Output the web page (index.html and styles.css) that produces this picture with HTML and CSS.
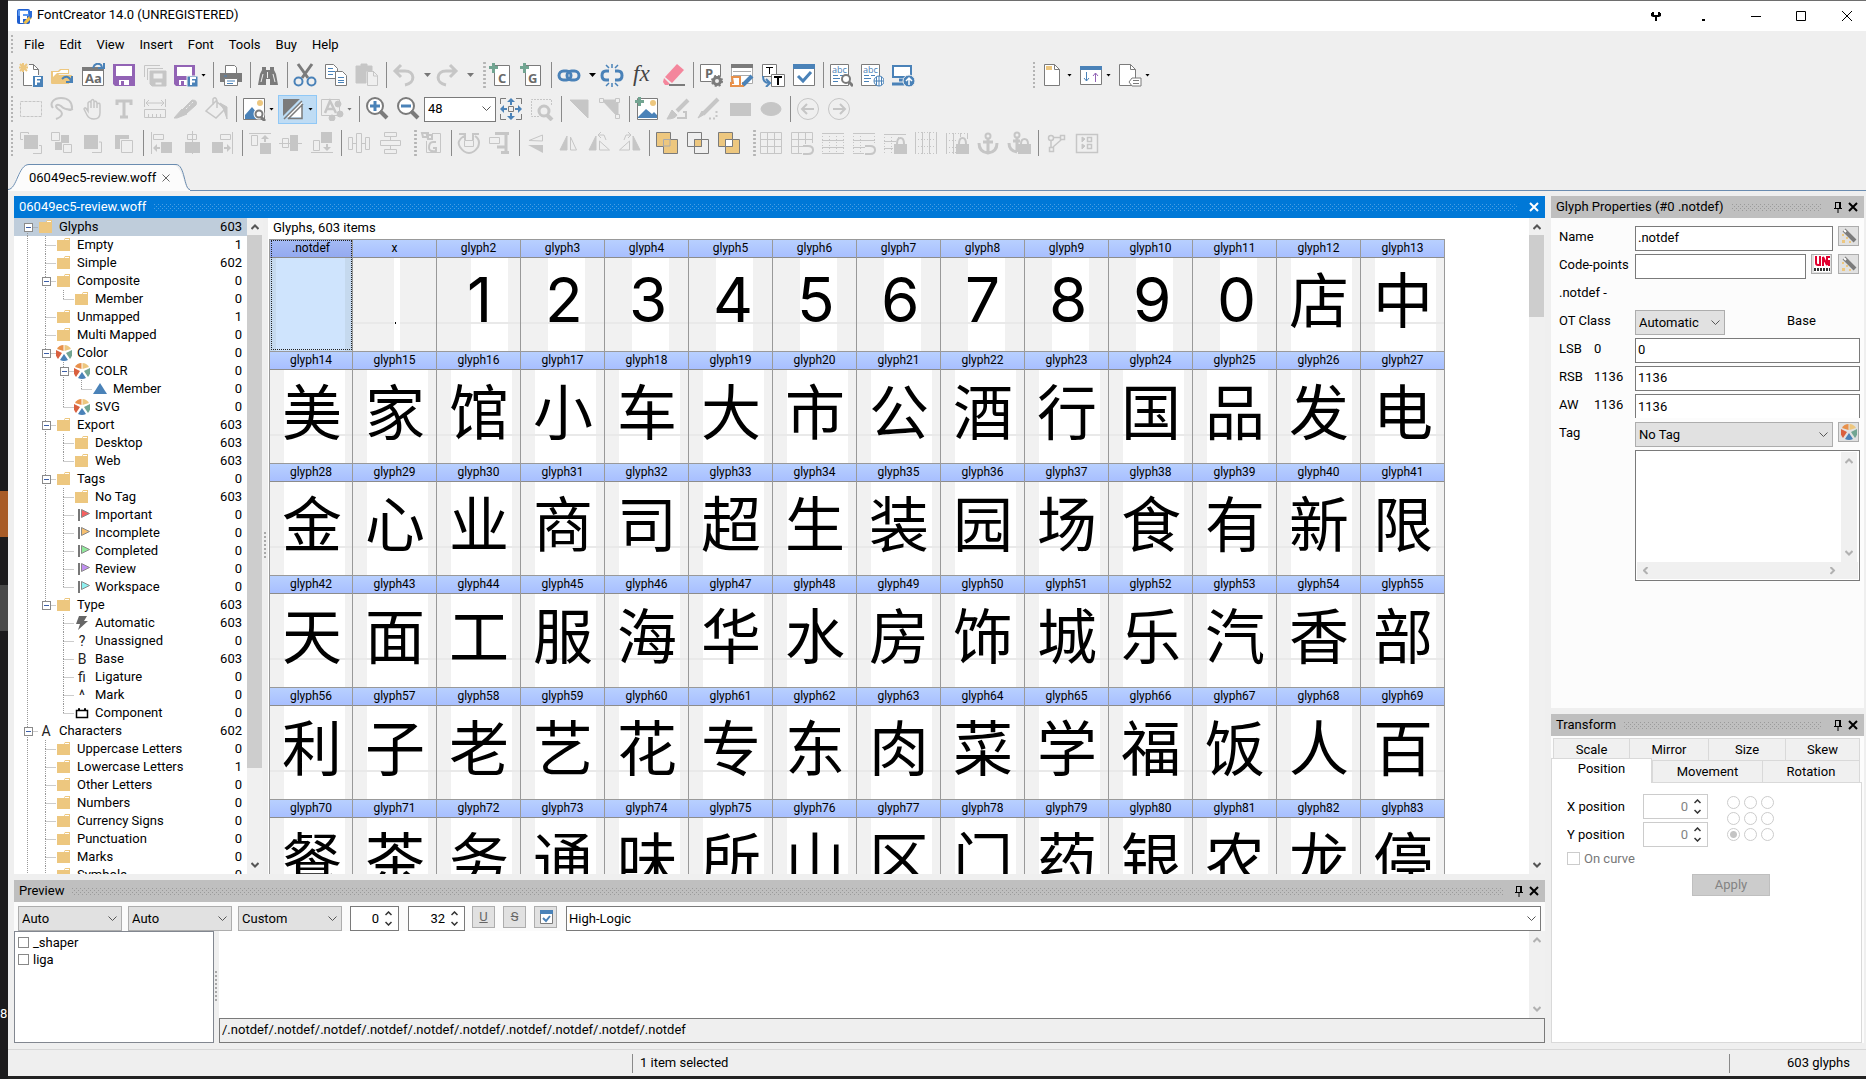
FILE: index.html
```html
<!DOCTYPE html>
<html lang="en">
<head>
<meta charset="utf-8">
<title>FontCreator 14.0 (UNREGISTERED)</title>
<link rel="stylesheet" href="styles.css">
<script src="app.js" defer></script>
</head>
<body>
<aside class="desktop"><i class="patch orange"></i><i class="patch grey"></i><span>8</span></aside>
<div class="window">
<header class="titlebar">
  <svg class="logo" viewBox="0 0 17 17"><rect x="1" y="1" width="13" height="15" rx="2" fill="#1f5fd0"/><rect x="2" y="2" width="11" height="6" rx="1" fill="#5a97f0"/><path d="M4 3h8v3H7v2h4v3H7v4H4z" fill="#fff"/><path d="M7 15l7-8 2 3-6 6z" fill="#f0c04a"/><path d="M12 3h4v6l-2 2-1-4z" fill="#2a6cd8"/></svg>
  <h1>FontCreator 14.0 (UNREGISTERED)</h1>
  <div class="winbtns">
    <button aria-label="Support"><svg viewBox="0 0 10 10"><path d="M1 1h2v3h4V1h2v1h1v3L8 6H6v4H4V6H2L0 5V2h1z" fill="#000"/></svg></button>
    <button aria-label="More"><svg viewBox="0 0 10 10"><path d="M4 8h3v2H4z" fill="#000"/></svg></button>
    <button aria-label="Minimize"><svg viewBox="0 0 10 10"><path d="M0 5h10v1H0z" fill="#000"/></svg></button>
    <button aria-label="Maximize"><svg viewBox="0 0 10 10"><path d="M.5.5h9v9h-9z" stroke="#000"/></svg></button>
    <button aria-label="Close"><svg viewBox="0 0 10 10"><path d="M0 0l10 10M10 0L0 10" stroke="#000"/></svg></button>
  </div>
</header>
<nav class="menu"><i class="grip"></i><button>File</button><button>Edit</button><button>View</button><button>Insert</button><button>Font</button><button>Tools</button><button>Buy</button><button>Help</button></nav>

<div class="bar" role="toolbar" aria-label="Standard">
  <i class="grip"></i>
  <button aria-label="New"><svg viewBox="0 0 24 24"><path d="M10 2h4l6 5v15H4V10" fill="#fff" stroke="none"/><path d="M10 1.500h4.500l5 5V12M14.500 1.500v5h5M4.500 9v13.500H13" stroke="#7b7b7b"/><path d="M4 0v9M0 4.500h9M1 1l7 7M8 1L1 8" stroke="#edc77f" stroke-width="2"/><path d="M14 13h10v11H14z" fill="#4a82b8"/><path d="M17 22v-7h5M17 18.500h4" stroke="#fff" stroke-width="2"/></svg></button>
  <button aria-label="Open"><svg viewBox="0 0 24 24"><path d="M1 20V8h7l2-2h9v5H9L5 20z" fill="#edc77f"/><path d="M3 14V9h6l2-2h7v3H7z" fill="#fff"/><path d="M6 12h16l-3 9H1z" fill="#edc77f"/><path d="M12 16c4-4 8-2 9 2M22 13v6h-6" stroke="#4a82b8" stroke-width="2"/></svg></button>
  <button aria-label="Font overview"><svg viewBox="0 0 24 24"><path d="M1.500 4.500h21v18h-21z" fill="#fff" stroke="#7b7b7b"/><path d="M1 4h22v4H1z" fill="#7b7b7b"/><path d="M12 5c2-6 8-5 9-1M23 0v5h-6" stroke="#4a82b8" stroke-width="2"/><text x="4" y="20" class="it">Aa</text></svg></button>
  <button aria-label="Save"><svg viewBox="0 0 24 24"><path d="M1 1h22v22H3l-2-2z" fill="#9263b5"/><path d="M4 3h16v10H4zM7 17h10v5H7z" fill="#fff"/><path d="M9 18h3v4H9z" fill="#9263b5"/></svg></button>
  <button disabled aria-label="Save all"><svg viewBox="0 0 24 24"><path d="M1.500 14V2.500H17M4.500 17V5.500H20"/><path d="M7 8h16v15H9l-2-2z" fill="currentColor"/><path d="M10 10h10v6H10zM12 19h7v3h-7z" fill="#efefef"/></svg></button>
  <button class="dd" aria-label="Save as"><svg viewBox="0 0 24 24"><path d="M0 2h21v21H2l-2-2z" fill="#9263b5"/><path d="M3 4h15v9H3zM5 17h9v5H5z" fill="#fff"/><path d="M7 18h3v4H7z" fill="#9263b5"/><path d="M13 13h11v11H13z" fill="#4a82b8" stroke="#efefef"/><path d="M17 22v-7h5M17 18.500h4" stroke="#fff" stroke-width="2"/></svg><i class="arr"></i></button>
  <i class="sep"></i>
  <button aria-label="Print"><svg viewBox="0 0 24 24"><path d="M6.500 10V2.500h9l2 2V10" fill="#fff" stroke="#7b7b7b"/><path d="M1 10h22v9H1z" fill="#7b7b7b"/><path d="M5.500 15.500h13v7h-13z" fill="#fff" stroke="#7b7b7b"/><path d="M8 18h8M8 20.500h6M5 13h3" stroke="#4a82b8"/></svg></button>
  <i class="sep"></i>
  <button aria-label="Find"><svg viewBox="0 0 24 24"><path d="M6 4h4v3h4V4h4v3l2 4 2 11h-8v-6h-4v6H2l2-11 2-4z" fill="#7b7b7b"/><path d="M11.500 9v6M7 11l-2 8M17 11l2 8" stroke="#efefef"/></svg></button>
  <i class="sep"></i>
  <button aria-label="Cut"><svg viewBox="0 0 24 24"><path d="M5 1l10 14M19 1L9 15" stroke="#7b7b7b" stroke-width="3"/><circle cx="5.500" cy="18.500" r="4" stroke="#4a82b8" stroke-width="2"/><circle cx="18.500" cy="18.500" r="4" stroke="#4a82b8" stroke-width="2"/></svg></button>
  <button aria-label="Copy"><svg viewBox="0 0 24 24"><path d="M1.500 1.500h8l4 4v10h-12z" fill="#fff" stroke="#7b7b7b"/><path d="M4 5.500h5M4 8.500h7M4 11.500h5" stroke="#4a82b8"/><path d="M11.500 8.500h7l4 4v10h-11z" fill="#fff" stroke="#7b7b7b"/><path d="M14 14.500h6M14 17.500h6M14 19.500h6" stroke="#4a82b8"/></svg></button>
  <button disabled aria-label="Paste"><svg viewBox="0 0 24 24"><path d="M1 3h5V1h6v2h5v5h-6v12H1z" fill="currentColor"/><path d="M12.500 8.500h6l4 4v10h-10z" fill="#efefef"/><path d="M18.500 8v5h4M5 5.500h8" /></svg></button>
  <i class="sep"></i>
  <button class="dw" disabled aria-label="Undo"><svg viewBox="0 0 24 24"><path d="M3 8h10c10 0 11 12 0 14M9 2L3 8l6 6" stroke-width="3"/></svg><i class="arr"></i></button>
  <button class="dw" disabled aria-label="Redo"><svg viewBox="0 0 24 24"><path d="M21 8H11C1 8 0 20 11 22M15 2l6 6-6 6" stroke-width="3"/></svg><i class="arr"></i></button>
  <i class="grip mid"></i>
  <button aria-label="Add characters"><svg viewBox="0 0 24 24"><path d="M5.500 2.500h15v20h-15z" fill="#fff" stroke="#7b7b7b"/><path d="M4.500 0v10M0 4.500h9" stroke="#72a592" stroke-width="3"/><text x="9" y="20" class="it">C</text></svg></button>
  <button aria-label="Add glyphs"><svg viewBox="0 0 24 24"><path d="M5.500 2.500h15v20h-15z" fill="#fff" stroke="#7b7b7b"/><path d="M4.500 0v10M0 4.500h9" stroke="#72a592" stroke-width="3"/><text x="8" y="20" class="it">G</text></svg></button>
  <i class="sep"></i>
  <button class="dw" aria-label="Link"><svg viewBox="0 0 24 24" stroke="#4a82b8" stroke-width="3"><rect x="2" y="8" width="12" height="9" rx="4.500"/><rect x="10" y="8" width="12" height="9" rx="4.500"/></svg><i class="arr"></i></button>
  <button aria-label="Unlink"><svg viewBox="0 0 24 24" stroke="#4a82b8"><path d="M9 8H6q-4 0-4 4.500t4 4.500h3M15 8h3q4 0 4 4.500T18 17h-3" stroke-width="3"/><path d="M12 1v4M12 20v4M6 2l3 3M18 2l-3 3M6 23l3-3M18 23l-3-3" stroke-width="1.500"/></svg></button>
  <button aria-label="Function"><svg viewBox="0 0 24 24"><text x="2" y="18" class="fx">fx</text></svg></button>
  <button aria-label="Erase"><svg viewBox="0 0 24 24"><path d="M15 1l7 6L10 20l-7-6z" fill="#f4869c"/><path d="M2 15l6 6-2 1H3l-2-3z" fill="#f4869c"/><path d="M7 22h16" stroke="#7b7b7b" stroke-width="2"/></svg></button>
  <i class="sep"></i>
  <button aria-label="Properties"><svg viewBox="0 0 24 24"><path d="M1.500 1.500h20v17h-20z" fill="#fff" stroke="#7b7b7b"/><text x="6" y="15" class="it">P</text><circle cx="18" cy="18" r="5.500" fill="#efefef"/><circle cx="18" cy="18" r="3.500" stroke="#7b7b7b" stroke-width="3"/><circle cx="18" cy="18" r="5" stroke="#7b7b7b" stroke-width="2" stroke-dasharray="2 2"/></svg></button>
  <button aria-label="Metrics"><svg viewBox="0 0 24 24"><path d="M1.500 3.500h21v17h-21z" fill="#fff" stroke="#aaa"/><path d="M1 1h22v4H1z" fill="#7b7b7b"/><path d="M3 8.500h18M3 12.500h18" stroke="#aaa"/><path d="M2 14h8v9H1v-3h2zM10 18v5h3v-4" fill="#fff" stroke="#e8904a" stroke-width="2"/><path d="M13 22l9-9" stroke="#4a82b8" stroke-width="4"/></svg></button>
  <button aria-label="Convert"><svg viewBox="0 0 24 24"><path d="M1.500 1.500h14v12h-14z" fill="#fff" stroke="#7b7b7b"/><path d="M5 4.500h7M8.500 5v6" stroke="#000"/><path d="M10.500 11.500h13v12h-13z" fill="#fff" stroke="#7b7b7b"/><path d="M13 14h8M17 14v8" stroke="#000" stroke-width="2"/><path d="M2 13c0 5 2 7 6 7M5 16l4 4-4 4" stroke="#4a82b8" stroke-width="2"/></svg></button>
  <button aria-label="Validate"><svg viewBox="0 0 24 24"><path d="M1.500 1.500h21v21h-21z" fill="#fff" stroke="#7b7b7b"/><path d="M1 1h22v5H1z" fill="#4a82b8"/><path d="M6 13l5 5 8-9" stroke="#4a82b8" stroke-width="3"/></svg></button>
  <i class="sep"></i>
  <button aria-label="Preview text"><svg viewBox="0 0 24 24"><path d="M1.500 1.500h18v21h-18z" fill="#fff" stroke="#7b7b7b"/><text x="3" y="10" class="abc">abc</text><path d="M4 12.500h5M11 12.500h4M4 15.500h7M4 18.500h5" stroke="#4a82b8"/><circle cx="17" cy="16" r="4" fill="#fff" stroke="#7b7b7b" stroke-width="2"/><path d="M20 19l4 4" stroke="#7b7b7b" stroke-width="3"/></svg></button>
  <button aria-label="Preview in browser"><svg viewBox="0 0 24 24"><path d="M1.500 1.500h18v21h-18z" fill="#fff" stroke="#7b7b7b"/><text x="3" y="10" class="abc">abc</text><path d="M4 12.500h5M11 12.500h4M4 15.500h7M4 18.500h5" stroke="#4a82b8"/><circle cx="19" cy="18" r="5" fill="#fff" stroke="#4a82b8"/><path d="M14 18h10M19 13v10M16.500 14v8M21.500 14v8" stroke="#4a82b8"/></svg></button>
  <button aria-label="Install"><svg viewBox="0 0 24 24"><path d="M2 3h18v11H2z" fill="#fff" stroke="#4a82b8" stroke-width="2"/><path d="M8 17h5M1 21h12" stroke="#4a82b8" stroke-width="3"/><circle cx="18" cy="18" r="6" fill="#4a82b8" stroke="#efefef"/><path d="M18 22v-7M15 18l3-3 3 3" stroke="#fff" stroke-width="1.500"/></svg></button>
  <i class="grip far"></i>
  <button class="dd" aria-label="Page"><svg viewBox="0 0 24 24"><path d="M4.500 1.500h10l5 5v16h-15z" fill="#fff" stroke="#7b7b7b"/><path d="M14.500 1.500v5h5" stroke="#7b7b7b"/><path d="M6 3h6v4H6z" fill="#edc77f"/></svg><i class="arr"></i></button>
  <button class="dd" aria-label="Sort"><svg viewBox="0 0 24 24"><path d="M1.500 4.500h21v17h-21z" fill="#fff" stroke="#7b7b7b"/><path d="M1 3h22v4H1z" fill="#4a82b8"/><path d="M7.500 9v9M5 15l2.500 3 2.500-3" stroke="#4a82b8"/><path d="M16.500 19v-9M14 13l2.500-3 2.500 3" stroke="#9263b5"/></svg><i class="arr"></i></button>
  <button class="dd" aria-label="Tags"><svg viewBox="0 0 24 24"><path d="M1.500 1.500h11l5 5v16h-16z" fill="#fff" stroke="#7b7b7b"/><path d="M12.500 1.500v5h5" stroke="#7b7b7b"/><path d="M11 19l3-4h9v8h-9z" fill="#fff" stroke="#7b7b7b"/><path d="M15 17.500h6M15 20.500h6" stroke="#7b7b7b"/></svg><i class="arr"></i></button>
</div>

<div class="bar" role="toolbar" aria-label="Drawing">
  <i class="grip"></i>
  <button disabled aria-label="Select"><svg viewBox="0 0 24 24"><path d="M1.500 4.500h21v15h-21z" stroke-dasharray="3 1"/></svg></button>
  <button disabled aria-label="Lasso"><svg viewBox="0 0 24 24"><path d="M3 11C-1 6 4 1 11 1c7 0 11 4 11 10 0 2-2 3-5 1M23 12c-4 1-9 0-12-3-4-3-7 0-3 3 5 3 6 7-2 10" stroke-width="2"/></svg></button>
  <button disabled aria-label="Pan"><svg viewBox="0 0 24 24"><path d="M7 14V6q2-3 3 0V4q2-3 3 0v1q2-2 3 1v1q3-2 3 1v8q0 6-6 6-5 0-7-4l-3-6q1-3 4 2zM10 5v6M13 5v6M16 6v5" stroke-width="1.500"/></svg></button>
  <button disabled aria-label="Text"><svg viewBox="0 0 24 24"><path d="M5 8V4h14v4M12 4v16M8 20h8" stroke-width="3"/></svg></button>
  <button disabled aria-label="Measure"><svg viewBox="0 0 24 24"><path d="M1.500 2v8M22.500 2v8M3 6h18M6 3L3 6l3 3M18 3l3 3-3 3M1.500 12.500h21v8h-21zM5.500 17v3M9.500 17v3M13.500 17v3M17.500 17v3"/></svg></button>
  <button disabled aria-label="Knife"><svg viewBox="0 0 24 24"><path d="M9 12l9-9q6 0 4 5l-9 8z" fill="currentColor"/><path d="M8 12l5 5-10 4H0z" fill="currentColor"/><path d="M12 12l7-7" stroke="#efefef" stroke-dasharray="2 2"/></svg></button>
  <button disabled aria-label="Fill"><svg viewBox="0 0 24 24"><path d="M1 14L11 4l9 8-9 9zM8 8V2q3-3 4 2v7" stroke-width="1.500"/><path d="M15 6l7 4v12l-3-9z" fill="currentColor"/></svg></button>
  <i class="sep"></i>
  <button class="dd" aria-label="Background"><svg viewBox="0 0 24 24"><path d="M1.500 1.500h21v21h-21z" fill="#fff" stroke="#7b7b7b"/><path d="M3 22v-4l7-8 5 6v6z" fill="#4a82b8"/><circle cx="18" cy="6" r="3" fill="#edc77f"/><circle cx="17" cy="17" r="5.500" fill="#fff"/><circle cx="17" cy="17" r="3.500" stroke="#7b7b7b" stroke-width="2"/><path d="M19 20l4 4" stroke="#7b7b7b" stroke-width="3"/></svg><i class="arr"></i></button>
  <button class="dd on" aria-label="Fill mode"><svg viewBox="0 0 24 24"><path d="M3 2h18v18H3z" fill="#fff"/><path d="M2 2h18L2 20z" fill="#7b7b7b"/><path d="M1 22L22 1" stroke="#bcdcf4" stroke-width="3"/><path d="M7 21.500h14V7M3 22L21 4M7 22L22 7" stroke="#7b7b7b" stroke-width="1.500"/></svg><i class="arr"></i></button>
  <button class="dd" disabled aria-label="Contours"><svg viewBox="0 0 24 24"><path d="M1.500 2.500h18v16h-18z"/><path d="M5 16l5-12 6 12M7 12h7" stroke-width="2.500"/><circle cx="18" cy="7" r="3" fill="currentColor"/><circle cx="20" cy="17" r="3" fill="currentColor"/><circle cx="12" cy="21" r="3" fill="currentColor"/></svg><i class="arr"></i></button>
  <i class="sep"></i>
  <button aria-label="Zoom in"><svg viewBox="0 0 24 24"><circle cx="10" cy="9" r="8" fill="#fff" stroke="#7b7b7b" stroke-width="2"/><path d="M5 9h10M10 4v10" stroke="#4a82b8" stroke-width="3"/><path d="M15 14l7 7" stroke="#7b7b7b" stroke-width="4"/></svg></button>
  <button aria-label="Zoom out"><svg viewBox="0 0 24 24"><circle cx="10" cy="9" r="8" fill="#fff" stroke="#7b7b7b" stroke-width="2"/><path d="M5 9h10" stroke="#4a82b8" stroke-width="3"/><path d="M15 14l7 7" stroke="#7b7b7b" stroke-width="4"/></svg></button>
  <select class="edit zoom" aria-label="Zoom"><option>48</option></select>
  <button aria-label="Fit"><svg viewBox="0 0 24 24"><path d="M1.500 7V1.500H7M17 1.500h5.500V7M22.500 17v5.500H17M7 22.500H1.500V17M9.500 9.500h5v5h-5z" stroke="#7b7b7b"/><path d="M12 1l4 4h-3v3h-2V5H8zM12 23l4-4h-3v-3h-2v3H8zM1 12l4-4v3h3v2H5v3zM23 12l-4-4v3h-3v2h3v3z" fill="#4a82b8"/></svg></button>
  <button disabled aria-label="Zoom selection"><svg viewBox="0 0 24 24"><path d="M9 19.500H1.500v-17h20V9" stroke-dasharray="2 1"/><circle cx="14" cy="14" r="5" stroke-width="3"/><path d="M17 18l5 5" stroke-width="4"/></svg></button>
  <i class="sep"></i>
  <button disabled aria-label="Corner"><svg viewBox="0 0 24 24"><path d="M3 3h18v18z" fill="currentColor"/></svg></button>
  <button disabled aria-label="Corner nodes"><svg viewBox="0 0 24 24"><path d="M4 3h16v17z" fill="currentColor"/><path d="M1.500 1.500h4v4h-4zM17.500 1.500h4v4h-4zM17.500 17.500h4v4h-4z" fill="#efefef"/></svg></button>
  <i class="sep"></i>
  <button aria-label="Add image"><svg viewBox="0 0 24 24"><path d="M2.500 1.500h20v21h-20z" fill="#fff" stroke="#7b7b7b"/><path d="M3 20l8-8 6 5 2-2 3 3v3H3z" fill="#4a82b8"/><circle cx="18" cy="6" r="3" fill="#edc77f"/><path d="M4.500 0v9M0 4.500h9" stroke="#72a592" stroke-width="3"/></svg></button>
  <button disabled aria-label="Brush"><svg viewBox="0 0 24 24"><path d="M22 3L11 14" stroke-width="4"/><path d="M1 22l5-9 5 5q-2 4-10 4z" fill="currentColor"/><path d="M17 15h3v6h-9" stroke-width="2"/></svg></button>
  <button disabled aria-label="Pen"><svg viewBox="0 0 24 24"><path d="M21 2L6 17" stroke-width="4"/><path d="M1 21l4-7 3 3z" fill="currentColor"/><path d="M12 21.500h8M19.500 20v-7" stroke-dasharray="2 2" stroke-width="2"/></svg></button>
  <button disabled aria-label="Rectangle"><svg viewBox="0 0 24 24"><path d="M2 6h21v13H2z" fill="currentColor" stroke="none"/></svg></button>
  <button disabled aria-label="Ellipse"><svg viewBox="0 0 24 24"><ellipse cx="12" cy="12" rx="10" ry="6.500" fill="currentColor"/></svg></button>
  <i class="sep"></i>
  <button disabled aria-label="Previous"><svg viewBox="0 0 24 24"><circle cx="12" cy="12" r="10.500"/><path d="M6 12h12M11 7l-5 5 5 5" stroke-width="2"/></svg></button>
  <button disabled aria-label="Next"><svg viewBox="0 0 24 24"><circle cx="12" cy="12" r="10.500"/><path d="M6 12h12M13 7l5 5-5 5" stroke-width="2"/></svg></button>
</div>

<div class="bar" role="toolbar" aria-label="Arrange">
  <i class="grip"></i>
  <button disabled aria-label="To front"><svg viewBox="0 0 24 24"><path d="M5 4h14v14H5z" fill="currentColor" stroke="none"/><path d="M4 8.500H1.500v-7h8V3M14 22.500h8.500v-8H20"/></svg></button>
  <button disabled aria-label="Forward"><svg viewBox="0 0 24 24"><path d="M1.500 1.500h8v8h-8zM13.500 13.500h8v8h-8z"/><path d="M11 4h8v8h-7v7H5v-8h6z" fill="currentColor" stroke="none"/></svg></button>
  <button disabled aria-label="Backward"><svg viewBox="0 0 24 24"><path d="M3 4h14v14H3z" fill="currentColor" stroke="none"/><path d="M11 21.500h9.500V11H18"/></svg></button>
  <button disabled aria-label="To back"><svg viewBox="0 0 24 24"><path d="M3 4h14v4H8v10H3z" fill="currentColor" stroke="none"/><path d="M9.500 9.500h11v12h-11z"/></svg></button>
  <i class="sep"></i>
  <button disabled aria-label="Align left"><svg viewBox="0 0 24 24"><path d="M2.500 1v22M4.500 3.500h10v5h-10z"/><path d="M12 11h11v11H12zM4 17l4-4v3h3v2H8v3z" fill="currentColor" stroke="none"/></svg></button>
  <button disabled aria-label="Align centre"><svg viewBox="0 0 24 24"><path d="M12.500 0v23M7.500 3.500h9v5h-9z"/><path d="M5 11h15v11H5z" fill="currentColor" stroke="none"/></svg></button>
  <button disabled aria-label="Align right"><svg viewBox="0 0 24 24"><path d="M21.500 1v22M9.500 3.500h10v5h-10z"/><path d="M1 11h11v11H1zM20 17l-4-4v3h-3v2h3v3z" fill="currentColor" stroke="none"/></svg></button>
  <i class="sep"></i>
  <button disabled aria-label="Align top"><svg viewBox="0 0 24 24"><path d="M1 2.500h22M3.500 4.500h6v10h-6z"/><path d="M12 12h11v11H12zM17 4l4 4h-3v3h-2V8h-3z" fill="currentColor" stroke="none"/></svg></button>
  <button disabled aria-label="Align middle"><svg viewBox="0 0 24 24"><path d="M0 12.500h23M3.500 7.500h6v9h-6z" /><path d="M11 4h8v16h-8z" fill="currentColor" stroke="none"/></svg></button>
  <button disabled aria-label="Align bottom"><svg viewBox="0 0 24 24"><path d="M1 21.500h22M3.500 9.500h6v10h-6z"/><path d="M11 1h11v11H11zM17 20l4-4h-3v-3h-2v3h-3z" fill="currentColor" stroke="none"/></svg></button>
  <i class="sep"></i>
  <button disabled aria-label="Distribute horizontally"><svg viewBox="0 0 24 24"><path d="M1.500 6.500h4v12h-4zM9.500 2.500h5v19h-5zM18.500 6.500h4v12h-4zM6 12.500h3M15 12.500h3"/></svg></button>
  <button disabled aria-label="Distribute vertically"><svg viewBox="0 0 24 24"><path d="M6.500 1.500h12v4h-12zM2.500 9.500h20v5h-20zM6.500 18.500h12v4h-12zM12.500 6v3M12.500 15v3"/></svg></button>
  <i class="grip mid"></i>
  <button disabled aria-label="Link glyph"><svg viewBox="0 0 24 24"><path d="M12 2.500h8.500v19h-14V10"/><path d="M9 17q0-6 4-6h3M16 17h-3M16 16v4q-7 1-7-3" stroke-width="2"/><path d="M2 2h6v4H3zM7 4h5v4H8z" stroke-width="2"/></svg></button>
  <i class="sep"></i>
  <button disabled aria-label="Rotate"><svg viewBox="0 0 24 24"><path d="M7 5q-8 5-4 11 4 6 9 6t9-6q3-7-3-11M2 3h6v6M22 3h-6v6" stroke-width="2"/><path d="M7.500 9.500h9v6h-9z"/></svg></button>
  <button disabled aria-label="Clamp"><svg viewBox="0 0 24 24"><path d="M1.500 6.500h10v6h-10z"/><path d="M7 2.500h14M18 2v20M13 21.500h8M9 16h9" stroke-width="3"/></svg></button>
  <i class="sep"></i>
  <button disabled aria-label="Flip vertical"><svg viewBox="0 0 24 24"><path d="M4 9.500L17.500 4v6z"/><path d="M3 14h15v8z" fill="currentColor" stroke="none"/></svg></button>
  <button disabled aria-label="Flip horizontal"><svg viewBox="0 0 24 24"><path d="M4 19L11 5v14z" fill="currentColor"/><path d="M14.500 6v13h6z"/></svg></button>
  <button disabled aria-label="Rotate left"><svg viewBox="0 0 24 24"><path d="M2 19L9 5v14z" fill="currentColor"/><path d="M12.500 10v9h10zM12 4h5l2 5M14 1l-3 3 3 3"/></svg></button>
  <button disabled aria-label="Rotate right"><svg viewBox="0 0 24 24"><path d="M15 5v14h7z" fill="currentColor"/><path d="M11.500 10v9h-10zM6 9l2-5h5M10 1l3 3-3 3"/></svg></button>
  <i class="sep"></i>
  <button aria-label="Union"><svg viewBox="0 0 24 24"><path d="M1.500 1.500h14v7h7v14h-14v-7h-7z" fill="#edc77f" stroke="#7b7b7b"/><path d="M8.500 15V8.500H15V15z" stroke="#aaa"/></svg></button>
  <button aria-label="Intersection"><svg viewBox="0 0 24 24" stroke="#7b7b7b"><path d="M1.500 1.500h14v14h-14zM8.500 8.500h14v14h-14z"/><path d="M8.500 8.500h7v7h-7z" fill="#edc77f"/></svg></button>
  <button aria-label="Exclusion"><svg viewBox="0 0 24 24" stroke="#7b7b7b"><path d="M1.500 1.500h14v14h-14zM8.500 8.500h14v14h-14z" fill="#edc77f"/><path d="M8.500 8.500h7v7h-7z" fill="#fff"/></svg></button>
  <i class="grip mid"></i>
  <button disabled aria-label="Grid"><svg viewBox="0 0 24 24"><path d="M1.500 1.500h21v21h-21zM8.500 1v21M15.500 1v21M1 8.500h22M1 15.500h22"/></svg></button>
  <button disabled aria-label="Snap to grid"><svg viewBox="0 0 24 24"><path d="M12 22.500H1.500v-21h21V12M8.500 1v21M15.500 1v12M1 8.500h22M1 15.500h12"/><path d="M13 15h5q5 0 5 4t-5 4h-5" stroke-width="2"/></svg></button>
  <button disabled aria-label="Horizontal guides"><svg viewBox="0 0 24 24"><path d="M1 2.500h22M1 9.500h22M1 16.500h22M1 22.500h22"/><path d="M1.500 2v20M8.500 2v20M15.500 2v20M22.500 2v20" stroke-dasharray="1 2"/></svg></button>
  <button disabled aria-label="Snap to horizontal guides"><svg viewBox="0 0 24 24"><path d="M1 2.500h22M1 9.500h22M1 16.500h12M1 22.500h11"/><path d="M1.500 2v20M8.500 2v20M22.500 2v10" stroke-dasharray="1 2"/><path d="M13 15h5q5 0 5 4t-5 4h-5" stroke-width="2"/></svg></button>
  <button disabled aria-label="Lock horizontal guides"><svg viewBox="0 0 24 24"><path d="M1 3.500h22M1 10.500h12M1 17.500h9"/><path d="M1.500 3v19M8.500 3v19M15.500 3v6" stroke-dasharray="1 2"/><path d="M11 13h13v10H11z" fill="currentColor" stroke="none"/><path d="M14 13q0-6 3.500-6t3.500 6" stroke-width="2"/></svg></button>
  <button disabled aria-label="Vertical guides"><svg viewBox="0 0 24 24"><path d="M1.500 1v22M8.500 1v22M15.500 1v22M22.500 1v22"/><path d="M1 1.500h22M1 8.500h22M1 15.500h22M1 22.500h22" stroke-dasharray="1 2"/></svg></button>
  <button disabled aria-label="Lock vertical guides"><svg viewBox="0 0 24 24"><path d="M1.500 2v21M8.500 2v21M15.500 2v4M22.500 2v6"/><path d="M1 2.500h22M1 9.500h12M1 16.500h10M1 21.500h10" stroke-dasharray="1 2"/><path d="M11 13h13v10H11z" fill="currentColor" stroke="none"/><path d="M14 13q0-6 3.500-6t3.500 6" stroke-width="2"/></svg></button>
  <button disabled aria-label="Anchor"><svg viewBox="0 0 24 24" stroke-width="3"><circle cx="12" cy="5" r="2.500" stroke-width="2"/><path d="M12 8v14M7 11h10M3 12q0 9 9 10 9-1 9-10"/></svg></button>
  <button disabled aria-label="Lock anchors"><svg viewBox="0 0 24 24" stroke-width="3"><circle cx="10" cy="4" r="2.500" stroke-width="2"/><path d="M10 7v14M6 10h7M2 12q0 8 8 9"/><path d="M11 13h13v10H11z" fill="currentColor" stroke="none"/><path d="M14 13q0-5 3.500-5t3.500 5" stroke-width="2"/></svg></button>
  <i class="sep"></i>
  <button disabled aria-label="Path"><svg viewBox="0 0 24 24" stroke-width="1.500"><circle cx="7" cy="7" r="2.500"/><path d="M16.500 4.500h4v4h-4zM5.500 16.500h4v4h-4zM10 6.500h6M7 10v6M9 16l8-7"/></svg></button>
  <button disabled aria-label="Kerning"><svg viewBox="0 0 24 24"><path d="M1.500 3.500h21v18h-21z" stroke-width="1.500"/><path d="M7 6v5l3-3zM7 13v5l3-3z" fill="currentColor"/><path d="M12.500 6.500h4v4h-4zM12.500 13.500h4v4h-4z" stroke-width="1.500"/></svg></button>
</div>

<div class="tabs"><div class="tab"><svg viewBox="0 0 182 27"><path d="M0 26C8 26 8 1 20 1h144c12 0 11 25 18 25v1H0z" fill="#fcfcfc" stroke="none"/><path d="M0 25.500C9 25.500 10 .5 21 .5h147C177 .5 176 25.500 182 25.500" stroke="#6a8cb0"/></svg><span>06049ec5-review.woff</span><button aria-label="Close tab"><svg viewBox="0 0 10 10"><path d="M1.500 1.500l7 7M8.500 1.500l-7 7" stroke="#666"/></svg></button></div></div>

<main class="work">
  <div class="left">
    <section class="doc">
      <div class="cap blue"><h2>06049ec5-review.woff</h2><i class="tex"></i><button aria-label="Close"><svg viewBox="0 0 10 10"><path d="M1 1l8 8M9 1L1 9" stroke="currentColor" stroke-width="2"/></svg></button></div>
      <div class="docbody">
        <div class="treewrap"><ul class="tree" id="tree"></ul></div>
        <div class="vbar"><i class="up"></i><i class="thumb long"></i><i class="down"></i></div>
        <i class="vsplit"></i>
        <div class="glyphs"><p>Glyphs, 603 items</p><div class="grid" id="grid"></div></div>
        <div class="vbar"><i class="up"></i><i class="thumb short"></i><i class="down"></i></div>
      </div>
    </section>
    <section class="preview">
      <div class="cap"><h2>Preview</h2><i class="tex"></i><button aria-label="Pin"><svg viewBox="0 0 10 12"><path d="M2.500 1.500h5v5M1 7.500h8M5 8v4M2.500 1v6" stroke="#000"/><path d="M6 1h2v6H6z" fill="#000"/></svg></button><button aria-label="Close"><svg viewBox="0 0 10 10"><path d="M1 1l8 8M9 1L1 9" stroke="currentColor" stroke-width="2"/></svg></button></div>
      <div class="ptools">
        <select aria-label="Script"><option>Auto</option></select>
        <select aria-label="Language"><option>Auto</option></select>
        <select aria-label="Features"><option>Custom</option></select>
        <label class="spin s1"><input value="0" aria-label="Tracking"><i></i></label>
        <label class="spin s2"><input value="32" aria-label="Size"><i></i></label>
        <button class="sq"><u>U</u></button><button class="sq"><s>S</s></button>
        <button class="sq" aria-label="Options"><svg viewBox="0 0 14 14"><path d="M1.500 1.500h12v12h-12z" fill="#fff" stroke="#7b7b7b"/><path d="M1 0h13v4H1z" fill="#4a82b8"/><path d="M4 8l3 3 4-5" stroke="#4a82b8" stroke-width="2"/></svg></button>
        <select class="edit grow" aria-label="Sample"><option>High-Logic</option></select>
      </div>
      <div class="pbody">
        <div class="feats"><label><input type="checkbox">_shaper</label><label><input type="checkbox">liga</label></div>
        <i class="vsplit thin"></i>
        <div class="pview"><div class="canvas"><i></i><div class="vbar off"><i class="up"></i><i class="down"></i></div></div>
        <input class="names" readonly aria-label="Glyph names" value="/.notdef/.notdef/.notdef/.notdef/.notdef/.notdef/.notdef/.notdef/.notdef/.notdef"></div>
      </div>
    </section>
  </div>
  <div class="right">
    <section class="props">
      <div class="cap"><h2>Glyph Properties (#0 .notdef)</h2><i class="tex"></i><button aria-label="Pin"><svg viewBox="0 0 10 12"><path d="M2.500 1.500h5v5M1 7.500h8M5 8v4M2.500 1v6" stroke="#000"/><path d="M6 1h2v6H6z" fill="#000"/></svg></button><button aria-label="Close"><svg viewBox="0 0 10 10"><path d="M1 1l8 8M9 1L1 9" stroke="currentColor" stroke-width="2"/></svg></button></div>
      <form class="form">
        <label for="nm">Name</label><div class="f"><input id="nm" value=".notdef"><button type="button" class="mini" aria-label="Generate name"><svg viewBox="0 0 18 18"><path d="M4 3l11 11" stroke="#7b7b7b" stroke-width="4"/><path d="M4 3l2 2" stroke="#fff" stroke-width="2"/><path d="M2 7h2v2H2zM6 10h2v2H6zM2 13h3v3H2zM9 14h2v2H9z" fill="#edc77f"/></svg></button></div>
        <label for="cp">Code-points</label><div class="f"><input id="cp"><button type="button" class="mini" aria-label="Unicode"><svg viewBox="0 0 18 18"><path d="M1 0h16v17H1z" fill="#fff"/><path d="M3 1v7q0 2 2 2h2V1M10 11V2l4 8V1M16 5v6M16 1v2" stroke="#e0002f" stroke-width="2"/><path d="M1 14.500h16" stroke="#333" stroke-width="3" stroke-dasharray="2 1"/></svg></button><button type="button" class="mini" aria-label="Generate code-point"><svg viewBox="0 0 18 18"><path d="M4 3l11 11" stroke="#7b7b7b" stroke-width="4"/><path d="M4 3l2 2" stroke="#fff" stroke-width="2"/><path d="M2 7h2v2H2zM6 10h2v2H6zM2 13h3v3H2zM9 14h2v2H9z" fill="#edc77f"/></svg></button></div>
        <span class="wide">.notdef -</span>
        <label for="ot">OT Class</label><div class="f"><select id="ot"><option>Automatic</option></select><span class="base">Base</span></div>
        <label for="lsb"><b>LSB</b>0</label><div class="f"><input id="lsb" value="0"></div>
        <label for="rsb"><b>RSB</b>1136</label><div class="f"><input id="rsb" value="1136"></div>
        <label for="aw"><b>AW</b>1136</label><div class="f"><input id="aw" class="cut" value="1136"></div>
        <label for="tag">Tag</label><div class="f"><select id="tag" class="grow"><option>No Tag</option></select><button type="button" class="mini" aria-label="Tag colour"><svg viewBox="0 0 16 16" id="wheel"></svg></button></div>
        <div class="note"><textarea aria-label="Note"></textarea><div class="vbar off"><i class="up"></i><i class="down"></i></div><div class="hbar"><i class="lt"></i><i class="rt"></i></div></div>
      </form>
    </section>
    <section class="trans">
      <div class="cap"><h2>Transform</h2><i class="tex"></i><button aria-label="Pin"><svg viewBox="0 0 10 12"><path d="M2.500 1.500h5v5M1 7.500h8M5 8v4M2.500 1v6" stroke="#000"/><path d="M6 1h2v6H6z" fill="#000"/></svg></button><button aria-label="Close"><svg viewBox="0 0 10 10"><path d="M1 1l8 8M9 1L1 9" stroke="currentColor" stroke-width="2"/></svg></button></div>
      <div class="trow one"><button>Scale</button><button>Mirror</button><button>Size</button><button>Skew</button></div>
      <div class="trow two"><button class="cur">Position</button><button>Movement</button><button>Rotation</button></div>
      <div class="tbody">
        <div class="xy">
          <label for="xp">X position</label><span class="spin dim"><input id="xp" value="0" disabled><i></i></span>
          <label for="yp">Y position</label><span class="spin dim"><input id="yp" value="0" disabled><i></i></span>
        </div>
        <div class="origin">
          <input type="radio" name="o" disabled aria-label="Top left"><input type="radio" name="o" disabled aria-label="Top"><input type="radio" name="o" disabled aria-label="Top right"><input type="radio" name="o" disabled aria-label="Left"><input type="radio" name="o" disabled aria-label="Centre"><input type="radio" name="o" disabled aria-label="Right"><input type="radio" name="o" disabled checked aria-label="Bottom left"><input type="radio" name="o" disabled aria-label="Bottom"><input type="radio" name="o" disabled aria-label="Bottom right">
        </div>
        <label class="curve"><input type="checkbox" disabled>On curve</label>
        <button class="apply" disabled>Apply</button>
      </div>
    </section>
  </div>
</main>
<footer class="status"><span class="note-text">1 item selected</span><span class="cnt">603 glyphs</span></footer>
</div>
</body>
</html>
```
FILE: styles.css
```css
* { box-sizing: border-box; }
body { margin: 0; height: 100vh; overflow: hidden; display: flex; background: #1c1b1d; color: #000; font: 13px/18px Roboto, "Noto Sans CJK SC", sans-serif; }
h1, h2, p, ul { margin: 0; padding: 0; font: inherit; font-weight: 400; }
button, input, select, textarea { font: inherit; color: inherit; margin: 0; border-radius: 0; }
button { border: 0; background: none; padding: 0; }
svg { fill: none; display: block; }
i { display: block; font-style: normal; }

.desktop { width: 8px; flex: none; display: flex; flex-direction: column; overflow: hidden; color: #fff; }
.patch.orange { height: 46px; margin-top: 491px; background: #a85c28; }
.patch.grey { height: 46px; margin: 48px 0 374px; background: #484848; }
.window { flex: 1; min-width: 0; display: flex; flex-direction: column; background: #efefef; border-top: 1px solid #6e6e6e; border-bottom: 3px solid #222; }

.titlebar { height: 30px; flex: none; background: #fff; display: flex; align-items: center; padding-left: 8px; }
.logo { width: 17px; height: 17px; margin-right: 4px; }
.titlebar h1 { flex: 1; padding-bottom: 2px; }
.winbtns { display: flex; }
.winbtns button { width: 24px; height: 28px; display: grid; place-items: center; }
.winbtns button:nth-child(2) { width: 70px; }
.winbtns button:nth-child(3) { width: 36px; }
.winbtns button:nth-child(4) { width: 54px; }
.winbtns button:nth-child(5) { width: 38px; }
.winbtns svg { width: 10px; height: 10px; }

.menu { height: 27px; flex: none; display: flex; align-items: center; }
.menu button { padding: 0 8px 0 7px; }
.grip { width: 8px; height: 26px; flex: none; background: url("data:image/svg+xml,%3Csvg xmlns='http://www.w3.org/2000/svg' width='8' height='4'%3E%3Cpath d='M3 0h2v2H3z' fill='%23b4b4b4'/%3E%3C/svg%3E"); }
.menu .grip { height: 20px; margin-right: 1px; }
.grip.mid { width: 11px; background-position: 4px 0; background-size: 11px 4px; }
.grip.far { width: 118px; background-repeat: repeat-y; background-position: 111px 0; background-size: 8px 4px; }

.bar { height: 34px; flex: none; display: flex; align-items: center; }
.bar button { width: 31px; height: 29px; display: flex; align-items: center; padding-left: 3px; flex: none; color: #444; }
.bar button:disabled { color: #c6c6c6; }
.bar svg { width: 24px; height: 24px; flex: none; }
.bar button:disabled svg { stroke: currentColor; }
.bar .dd { width: 39px; }
.bar .dw { width: 43px; }
.bar .on { background: #bfdcf4; box-shadow: inset 0 0 0 1px #90c8f6; }
.arr { width: 5px; height: 3px; background: #000; clip-path: polygon(0 0, 100% 0, 50% 100%); margin-left: 3px; }
.dw .arr { margin-left: 8px; width: 7px; height: 4px; }
.bar button:disabled .arr { background: #777; }
.sep { width: 6px; height: 26px; flex: none; background: linear-gradient(#8a8a8a, #8a8a8a) 3px 0 / 1px 100% no-repeat; }
.it { font: 700 13px "Open Sans", sans-serif; fill: #6a6a6a; }
.fx { font: italic 23px "Liberation Serif", serif; fill: #444; }
.abc { font: 9px "Open Sans", sans-serif; fill: #4a82b8; }

select { appearance: none; height: 25px; border: 1px solid #adadad; padding: 0 20px 0 3px; background: #e1e1e1 url("data:image/svg+xml,%3Csvg xmlns='http://www.w3.org/2000/svg' width='9' height='6'%3E%3Cpath d='M.5.500l4 4 4-4' fill='none' stroke='%23555'/%3E%3C/svg%3E") right 4px center no-repeat; }
select.edit { background-color: #fff; border-color: #7a7a7a; }
.grow { flex: 1; min-width: 0; }
.zoom { width: 72px; flex: none; }

.tabs { height: 31px; flex: none; display: flex; align-items: flex-end; background: linear-gradient(#6a8cb0, #6a8cb0) 0 100% / 100% 1px no-repeat; }
.tab { width: 182px; height: 27px; position: relative; display: flex; align-items: center; padding-left: 21px; }
.tab > svg { position: absolute; left: 0; top: 0; width: 182px; height: 27px; }
.tab span, .tab button { position: relative; }
.tab span { width: 132px; }
.tab button svg { width: 10px; height: 10px; }

.work { flex: 1; min-height: 0; display: grid; grid-template-columns: minmax(0, 1fr) 313px; gap: 6px; padding: 5px 2px 6px 6px; }
.left, .right { display: flex; flex-direction: column; gap: 6px; min-height: 0; }
.cap { height: 22px; flex: none; background: #bfbfbf; display: flex; align-items: center; padding: 0 6px 0 5px; }
.cap.blue { background: #0078d7; color: #fff; }
.cap h2 { padding-right: 8px; }
.tex { flex: 1; height: 7px; margin-right: 6px; background: url("data:image/svg+xml,%3Csvg xmlns='http://www.w3.org/2000/svg' width='4' height='4'%3E%3Cpath d='M0 0h1v1H0zM2 2h1v1H2z' fill='%239a9a9a'/%3E%3C/svg%3E"); }
.blue .tex { background-image: url("data:image/svg+xml,%3Csvg xmlns='http://www.w3.org/2000/svg' width='4' height='4'%3E%3Cpath d='M0 0h1v1H0zM2 2h1v1H2z' fill='%234a9fe4'/%3E%3C/svg%3E"); }
.cap button { width: 10px; margin-left: 5px; }
.cap svg { width: 10px; }

.doc { flex: 1; min-height: 0; display: flex; flex-direction: column; }
.docbody { flex: 1; min-height: 0; display: flex; background: #fff; }
.treewrap { width: 233px; overflow: hidden; flex: none; }
.tree { list-style: none; }
.tree li { height: 18px; display: flex; align-items: center; padding-right: 5px; }
.tree li.sel { background: #bfcddb; }
.tree .lines { height: 18px; flex: none; }
.tree .ic { width: 16px; height: 16px; flex: none; margin-right: 5px; }
.tree .ic text { font: 14px Roboto, sans-serif; fill: #222; }
.tree span { flex: 1; }

.vbar { width: 16px; flex: none; background: #f0f0f0; display: flex; flex-direction: column; }
.vbar i { flex: none; }
.up, .down, .lt, .rt { width: 16px; height: 17px; background: url("data:image/svg+xml,%3Csvg xmlns='http://www.w3.org/2000/svg' width='8' height='6'%3E%3Cpath d='M.5 5L4 1.500 7.500 5' fill='none' stroke='%23555' stroke-width='2'/%3E%3C/svg%3E") center no-repeat; }
.down { transform: rotate(180deg); margin-top: auto; }
.thumb { background: #cdcdcd; width: 15px; }
.vbar .long { flex: 0 1 533px; }
.vbar .short { flex: 0 1 82px; }
.off i { opacity: .4; }
.vsplit { width: 5px; flex: none; padding: 314px 1px; background: #efefef; display: grid; }
.vsplit::before { content: ""; background: url("data:image/svg+xml,%3Csvg xmlns='http://www.w3.org/2000/svg' width='2' height='4'%3E%3Cpath d='M0 0h2v2H0z' fill='%23a8a8a8'/%3E%3C/svg%3E") repeat-y; }
.vsplit.thin { padding: 40px 1px; }

.glyphs { flex: 1; min-width: 0; overflow: hidden; }
.glyphs p { height: 21px; line-height: 20px; padding-left: 5px; }
.grid { display: grid; grid-template-columns: 83px repeat(13, 84px); border-left: 1px solid #999; width: max-content; margin-left: 1px; }
.cell { height: 112px; border: solid #999; border-width: 1px 1px 0 0; }
.name { height: 18px; font-size: 12px; line-height: 17px; text-align: center; background: linear-gradient(#b8d0ff, #a8bfff); border-bottom: 1px solid #8c8c8c; }
.box, .adv { background-image: linear-gradient(transparent 64px, #e9e9e9 64px, #e9e9e9 66px, transparent 66px); }
.box { height: 93px; background-color: #f1f1f1; padding-left: 14px; overflow: hidden; }
.adv { width: 61px; height: 93px; background-color: #fff; font: 60px/77px "Noto Sans CJK SC", sans-serif; text-indent: -2px; white-space: nowrap; }
.digit .box { padding-left: 27px; }
.digit .adv { width: 37px; font: 62px/84px Inter, sans-serif; text-indent: -3px; }
.digit.one .box { padding-left: 34px; }
.digit.one .adv { text-indent: -4px; }
.dot .box { padding-left: 41px; }
.dot .adv { width: 6px; background-image: linear-gradient(#000, #000); background-size: 1px 2px; background-repeat: no-repeat; background-position: 1px 64px; }
.picked { outline: 1px dotted #222; outline-offset: -2px; }
.picked .name { background: linear-gradient(#a4baf4, #94aaf0); }
.picked .box { background-color: #c5d9ee; background-image: none; padding-left: 6px; }
.picked .adv { width: 69px; background-color: #cfe4fd; background-image: none; }

.preview { height: 163px; flex: none; display: flex; flex-direction: column; }
.ptools { height: 29px; flex: none; background: #fbfbfb; display: flex; align-items: flex-start; padding: 4px 4px 0; }
.ptools select { width: 104px; margin-right: 6px; flex: none; }
.ptools select.grow { flex: 1; margin: 0 0 0 1px; padding-left: 2px; }
.spin { display: flex; height: 25px; border: 1px solid #7a7a7a; background: #fff; }
.spin input { flex: 1; min-width: 0; width: 20px; border: 0; padding: 0; background: none; text-align: right; }
.spin i { width: 19px; flex: none; background: url("data:image/svg+xml,%3Csvg xmlns='http://www.w3.org/2000/svg' width='7' height='15'%3E%3Cpath d='M.5 4l3-3 3 3M.500 11l3 3 3-3' fill='none' stroke='%23333' stroke-width='1.500'/%3E%3C/svg%3E") center no-repeat; }
.s1 { width: 49px; margin: 0 9px 0 2px; }
.s2 { width: 57px; margin-right: 7px; }
.sq { width: 23px; height: 22px; border: 1px solid #adadad; background: #e1e1e1; color: #666; margin-right: 8px; display: grid; place-items: center; }
.sq svg { width: 14px; height: 14px; }
.pbody { flex: 1; min-height: 0; display: flex; }
.feats { width: 200px; border: 1px solid #828790; background: #fff; padding: 2px 3px; }
.feats label, .curve { display: flex; align-items: center; height: 17px; gap: 4px; }
input[type=checkbox] { appearance: none; width: 11px; height: 11px; border: 1px solid #888; background: #fff; flex: none; }
.pview { flex: 1; display: flex; flex-direction: column; min-width: 0; }
.canvas { flex: 1; display: flex; background: #fff; }
.canvas > i { flex: 1; }
.names { height: 25px; border: 1px solid #7a7a7a; background: #efefef; padding: 0 0 3px 2px; width: 100%; }

.props { flex: 1; display: flex; flex-direction: column; background: #fcfcfc; }
.form { display: grid; grid-template-columns: 76px minmax(0, 1fr); grid-auto-rows: 25px; row-gap: 3px; padding: 8px 4px 0 8px; }
.form > label { line-height: 21px; }
.form b { display: inline-block; width: 35px; font-weight: 400; }
.wide { grid-column: 1 / 3; line-height: 21px; }
.f { display: flex; gap: 5px; }
.f input { flex: 1; min-width: 0; height: 25px; border: 1px solid #7a7a7a; background: #fff; padding: 0 2px 2px; }
.f input.cut { height: 24px; border-bottom: 0; padding-bottom: 1px; }
.mini { width: 21px; height: 20px; border: 1px solid #adadad; background: #e1e1e1; display: grid; place-items: center; margin-right: 1px; }
.mini svg { width: 18px; height: 18px; }
.mini #wheel { width: 16px; height: 16px; }
#ot { width: 90px; }
.base { padding-left: 57px; line-height: 21px; }
.note { grid-column: 2; height: 131px; border: 1px solid #7a7a7a; background: #fff; display: grid; grid-template: 1fr 17px / 1fr 17px; padding: 1px; }
.note textarea { border: 0; resize: none; padding: 0; outline: 0; min-width: 0; width: 100%; }
.hbar { grid-column: 1 / 3; background: #f0f0f0; display: flex; justify-content: space-between; padding-right: 17px; }
.hbar i { opacity: .4; }
.lt { transform: rotate(-90deg); }
.rt { transform: rotate(90deg); }

.trans { height: 329px; flex: none; background: #fcfcfc; display: flex; flex-direction: column; }
.trow { display: grid; margin-right: 4px; height: 22px; flex: none; }
.trow button { background: #f0f0f0; border: 1px solid #d9d9d9; border-width: 1px 0 0 1px; }
.trow button:last-child { border-right-width: 1px; }
.trow.one { grid-template-columns: 76fr 79fr 77fr 75fr; margin: 2px 4px 0 2px; }
.trow.two { grid-template-columns: 101fr 110fr 98fr; }
.trow .cur { background: #fff; margin: -2px 0 -1px; padding-bottom: 4px; z-index: 1; border-right-width: 1px; }
.tbody { flex: 1; border: 1px solid #d9d9d9; margin-right: 2px; background: #fff; display: grid; grid-template: 53px 21px 22px / 142px 1fr; padding: 11px 15px 0; column-gap: 18px; row-gap: 3px; }
.xy { display: grid; grid-template-columns: 76px 65px; row-gap: 3px; line-height: 25px; }
.dim { border-color: #ccc; color: #838383; }
.origin { display: grid; grid-template: repeat(3, 13px) / repeat(3, 13px); gap: 3px 4px; padding-top: 2px; align-content: start; }
.origin input { appearance: none; width: 13px; height: 13px; border: 1px solid #ccc; border-radius: 50%; background: #fff; }
.origin input:checked { background: radial-gradient(#c4c4c4 3px, #fff 4px); }
.curve { grid-column: 1 / 3; color: #777; }
.curve input { width: 13px; height: 13px; border-color: #ccc; }
.apply { grid-column: 1 / 3; width: 78px; margin-left: 125px; border: 1px solid #bfbfbf; background: #ccc; color: #838383; }

.status { height: 27px; flex: none; border-top: 1px solid #d7d7d7; display: flex; align-items: center; justify-content: space-between; padding: 0 16px 0 624px; }
.status span { height: 19px; line-height: 18px; border-left: 1px solid #8a8a8a; }
.note-text { padding-left: 7px; }
.cnt { width: 121px; text-align: right; }
```
FILE: app.js
```js
const wheel = '<path d="M7.500 6V0Q3 0 1 4z" fill="#e8904a"/><path d="M8.500 6V0q4 0 6.500 4z" fill="#edc77f"/><path d="M10 8l6-3q1 6-2 9z" fill="#72a592"/><path d="M8 9l4 6q-4 2-8 0z" fill="#4a82b8"/><path d="M6 8L0 5q-1 6 2 9z" fill="#d9603f"/>';
const letter = c => `<text x="8" y="13" text-anchor="middle">${c}</text>`;
const flag = c => `<path d="M5 2v12" stroke="#777" stroke-width="2"/><path d="M7.500 2.500l8 4-8 4z" fill="${c}" stroke="#888"/>`;
const icons = {
  folder: '<path d="M1 3h7l1-2h5v13H1z" fill="#edc77f"/><path d="M9 2.500h4" stroke="#fff"/>',
  wheel,
  drop: '<path d="M8 2l7 11H1z" fill="#4a82b8"/>',
  bolt: '<path d="M5 1h8l-3 5h4L4 15l2-6H2z" fill="#666"/>',
  brick: '<path d="M2.500 5.500h11v7h-11zM4 4h2M10 4h2" stroke="#000" stroke-width="1.500"/>',
  red: flag('#f56060'), orange: flag('#f7c070'), green: flag('#8fe89a'), violet: flag('#c090f0'), cyan: flag('#8ff0f0'),
  q: letter('?'), b: letter('B'), fi: letter('fi'), hat: letter('^'), a: letter('A')
};
// depth, icon, label, count
const rows = [
  [0, 'folder', 'Glyphs', 603], [1, 'folder', 'Empty', 1], [1, 'folder', 'Simple', 602], [1, 'folder', 'Composite', 0],
  [2, 'folder', 'Member', 0], [1, 'folder', 'Unmapped', 1], [1, 'folder', 'Multi Mapped', 0], [1, 'wheel', 'Color', 0],
  [2, 'wheel', 'COLR', 0], [3, 'drop', 'Member', 0], [2, 'wheel', 'SVG', 0], [1, 'folder', 'Export', 603],
  [2, 'folder', 'Desktop', 603], [2, 'folder', 'Web', 603], [1, 'folder', 'Tags', 0], [2, 'folder', 'No Tag', 603],
  [2, 'red', 'Important', 0], [2, 'orange', 'Incomplete', 0], [2, 'green', 'Completed', 0], [2, 'violet', 'Review', 0],
  [2, 'cyan', 'Workspace', 0], [1, 'folder', 'Type', 603], [2, 'bolt', 'Automatic', 603], [2, 'q', 'Unassigned', 0],
  [2, 'b', 'Base', 603], [2, 'fi', 'Ligature', 0], [2, 'hat', 'Mark', 0], [2, 'brick', 'Component', 0],
  [0, 'a', 'Characters', 602], [1, 'folder', 'Uppercase Letters', 0], [1, 'folder', 'Lowercase Letters', 1],
  [1, 'folder', 'Other Letters', 0], [1, 'folder', 'Numbers', 0], [1, 'folder', 'Currency Signs', 0],
  [1, 'folder', 'Punctuation', 0], [1, 'folder', 'Marks', 0], [1, 'folder', 'Symbols', 0]
];
// true when a later row continues the branch at the given level
const continues = (i, level) => {
  for (let k = i + 1; k < rows.length; k++) {
    if (rows[k][0] < level) return false;
    if (rows[k][0] === level) return true;
  }
  return level < 2;
};
document.getElementById('tree').innerHTML = rows.map(([d, icon, label, count], i) => {
  const w = 24 + d * 18;
  let p = '';
  for (let j = 0; j <= d; j++) {
    const x = 13.5 + j * 18;
    const more = continues(i, j);
    if (j < d) { if (more) p += `M${x} 0V18`; continue; }
    if (i) p += `M${x} 0V9`;
    if (more) p += `M${x} 9V18`;
    p += `M${x} 9.5H${w}`;
  }
  const parent = rows[i + 1] && rows[i + 1][0] > d;
  const bx = 10 + d * 18;
  const box = parent ? `<rect x="${bx + .5}" y="5.5" width="8" height="8" fill="#fff" stroke="#8a8a8a"/><path d="M${bx + 2} 9.5h5" stroke="#3c5fa8"/>` : '';
  return `<li class="${i ? '' : 'sel'}"><svg class="lines" width="${w}" viewBox="0 0 ${w} 18"><path d="${p}" stroke="#999" stroke-dasharray="1 1"/>${box}</svg><svg class="ic" viewBox="0 0 16 16">${icons[icon]}</svg><span>${label}</span>${count}</li>`;
}).join('');
document.getElementById('wheel').innerHTML = wheel;

const glyphs = '  1234567890店中美家馆小车大市公酒行国品发电金心业商司超生装园场食有新限天面工服海华水房饰城乐汽香部利子老艺花专东肉菜学福饭人百餐茶务通味所山区门药银农龙停';
document.getElementById('grid').innerHTML = [...glyphs].map((g, i) => {
  const name = i === 0 ? '.notdef' : i === 1 ? 'x' : 'glyph' + i;
  const kind = i === 0 ? ' picked' : i === 1 ? ' dot' : i < 12 ? ' digit' + (i === 2 ? ' one' : '') : '';
  return `<div class="cell${kind}"><div class="name">${name}</div><div class="box"><div class="adv">${g}</div></div></div>`;
}).join('');
```
